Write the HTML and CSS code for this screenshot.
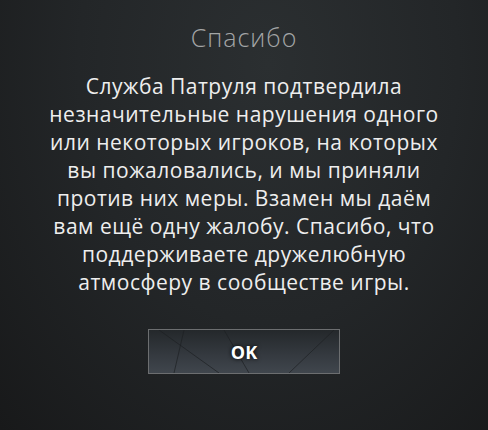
FILE: index.html
```html
<!DOCTYPE html>
<html lang="ru">
<head>
  <meta charset="UTF-8">
  <title>Спасибо</title>
  <link rel="stylesheet" href="styles.css">
</head>
<body>
  <div class="dialog">
    <h1 class="title">Спасибо</h1>
    <p class="message">Служба Патруля подтвердила<br>незначительные нарушения одного<br>или некоторых игроков, на которых<br>вы пожаловались, и мы приняли<br>против них меры. Взамен мы даём<br>вам ещё одну жалобу. Спасибо, что<br>поддерживаете дружелюбную<br>атмосферу в сообществе игры.</p>
    <button class="ok-btn">
      <svg class="btn-lines" width="190" height="43" viewBox="0 0 190 43">
        <path d="M10 0 L70 43" />
        <path d="M35 0 L25 43" />
        <path d="M75 0 L100 43" />
        <path d="M185 0 L140 43" />
      </svg>
      <span>OK</span>
    </button>
  </div>
</body>
</html>
```

FILE: styles.css
```css
html, body {
  margin: 0;
  height: 100%;
}
body {
  background: radial-gradient(ellipse at 55% 15%, #2b2f31 0%, #232628 50%, #18191a 100%);
  font-family: "Open Sans", sans-serif;
  overflow: hidden;
}
.dialog {
  display: flex;
  flex-direction: column;
  align-items: center;
  padding-top: 20px;
}
.title {
  margin: 0;
  font-size: 25px;
  font-weight: 300;
  color: #a3a5a6;
  letter-spacing: 1px;
  line-height: 34px;
}
.message {
  margin: 18px 0 0 0;
  width: 460px;
  text-align: center;
  font-size: 21px;
  letter-spacing: 0.5px;
  line-height: 28px;
  color: #eeeeee;
}
.ok-btn {
  position: relative;
  margin-top: 33px;
  width: 192px;
  height: 45px;
  border: 1px solid #6c6e70;
  background: linear-gradient(to bottom, #24282b 0%, #353a40 60%, #40464d 100%);
  color: #fff;
  font-family: "Open Sans", sans-serif;
  font-weight: 700;
  font-size: 18px;
  text-shadow: 0 0 4px #000;
  padding: 0;
  overflow: hidden;
}
.btn-lines {
  position: absolute;
  left: 0;
  top: 0;
}
.btn-lines path {
  stroke: #1e2124;
  stroke-width: 1;
  fill: none;
  opacity: 0.7;
}
.ok-btn span {
  position: relative;
}
```
